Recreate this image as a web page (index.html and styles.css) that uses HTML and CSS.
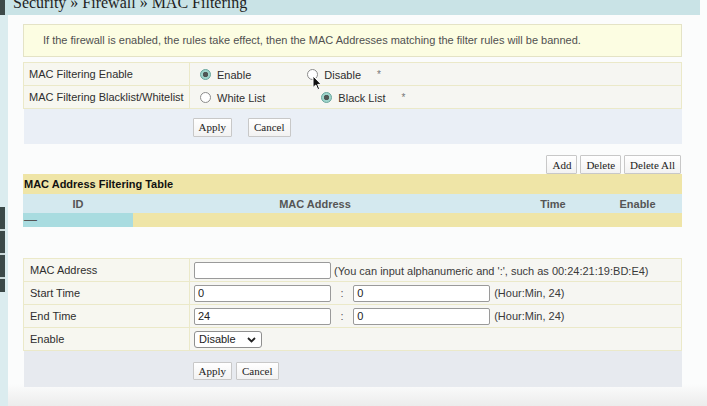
FILE: index.html
```html
<!DOCTYPE html>
<html lang="en">
<head>
<meta charset="UTF-8">
<title>MAC Filtering</title>
<link rel="stylesheet" href="styles.css">
</head>
<body>
<div class="frame">
    <aside class="rail">
        <span class="rail-top"></span>
        <span class="rail-item"></span>
        <span class="rail-item"></span>
        <span class="rail-item"></span>
        <span class="rail-item short"></span>
    </aside>

    <main class="page">
        <h1 class="crumbs">Security &raquo; Firewall &raquo; MAC Filtering</h1>

        <div class="content">
            <p class="notice">If the firewall is enabled, the rules take effect, then the MAC Addresses matching the filter rules will be banned.</p>

            <table class="settings">
                <colgroup><col class="c-label"><col></colgroup>
                <tr>
                    <td class="label">MAC Filtering Enable</td>
                    <td class="value">
                        <label class="opt"><input type="radio" name="filter" checked>Enable</label>
                        <label class="opt last">
                            <input type="radio" name="filter">Disable
                            <svg class="cursor" width="10" height="16" viewBox="0 0 10 16">
                                <path d="M1 1 L1 12.5 L3.8 10 L5.8 14.6 L7.6 13.8 L5.7 9.4 L9.2 9.4 Z" fill="#111" stroke="#fff" stroke-width="1"/>
                            </svg>
                        </label>
                        <span class="req">*</span>
                    </td>
                </tr>
                <tr>
                    <td class="label">MAC Filtering Blacklist/Whitelist</td>
                    <td class="value">
                        <label class="opt"><input type="radio" name="mode">White List</label>
                        <label class="opt last"><input type="radio" name="mode" checked>Black List</label>
                        <span class="req">*</span>
                    </td>
                </tr>
                <tr class="actions">
                    <td></td>
                    <td>
                        <div class="btns wide">
                            <button type="button" class="btn">Apply</button>
                            <button type="button" class="btn">Cancel</button>
                        </div>
                    </td>
                </tr>
            </table>

            <div class="toolbar">
                <button type="button" class="btn">Add</button>
                <button type="button" class="btn">Delete</button>
                <button type="button" class="btn">Delete All</button>
            </div>

            <table class="list">
                <colgroup><col class="c-id"><col class="c-mac"><col class="c-time"><col></colgroup>
                <tr class="title"><th colspan="4">MAC Address Filtering Table</th></tr>
                <tr class="head"><th>ID</th><th>MAC Address</th><th>Time</th><th class="en">Enable</th></tr>
                <tr class="empty"><td class="id">&mdash;</td><td colspan="3"></td></tr>
            </table>

            <table class="entry">
                <colgroup><col class="c-label"><col></colgroup>
                <tr>
                    <td class="label">MAC Address</td>
                    <td class="value">
                        <input type="text" class="field">
                        <span class="hint mac">(You can input alphanumeric and ':', such as 00:24:21:19:BD:E4)</span>
                    </td>
                </tr>
                <tr>
                    <td class="label">Start Time</td>
                    <td class="value">
                        <input type="text" class="field" value="0">
                        <span class="colon">:</span>
                        <input type="text" class="field" value="0">
                        <span class="hint">(Hour:Min, 24)</span>
                    </td>
                </tr>
                <tr>
                    <td class="label">End Time</td>
                    <td class="value">
                        <input type="text" class="field" value="24">
                        <span class="colon">:</span>
                        <input type="text" class="field" value="0">
                        <span class="hint">(Hour:Min, 24)</span>
                    </td>
                </tr>
                <tr>
                    <td class="label">Enable</td>
                    <td class="value">
                        <div class="select-wrap">
                            <select class="select">
                                <option>Disable</option>
                                <option>Enable</option>
                            </select>
                            <svg class="chev" width="9" height="6" viewBox="0 0 9 6">
                                <path d="M1 1 L4.5 4.5 L8 1" fill="none" stroke="#222" stroke-width="1.8"/>
                            </svg>
                        </div>
                    </td>
                </tr>
                <tr class="actions">
                    <td></td>
                    <td>
                        <div class="btns">
                            <button type="button" class="btn">Apply</button>
                            <button type="button" class="btn">Cancel</button>
                        </div>
                    </td>
                </tr>
            </table>
        </div>
    </main>
</div>
</body>
</html>
```

FILE: styles.css
```css
body {
    margin: 0;
    font-family: "Liberation Sans", Arial, sans-serif;
    font-size: 11px;
    color: #333;
    background: #f9fafa;
}
.frame {
    display: flex;
    min-height: 406px;
}

/* left menu strip */
.rail {
    width: 8px;
    display: flex;
    flex-direction: column;
    background: #dbecef;
}
.rail-top {
    height: 15px;
    margin-bottom: 192px;
    background: linear-gradient(to right, #3e4a49 5px, #c9e3e6 5px);
}
.rail-item {
    width: 5px;
    height: 22px;
    background: #3b4948;
    border-bottom: 2px solid #c9d8d8;
}
.rail-item.short {
    height: 13px;
    border: 0;
}

.page {
    flex: 1;
    background: linear-gradient(to bottom, #fbfcfc 0, #fbfcfc 384px, #ececec 406px);
}
.crumbs {
    margin: 0 7px 0 0;
    height: 15px;
    padding-left: 5px;
    overflow: hidden;
    background: #c9e3e6;
    font-family: "Liberation Serif", serif;
    font-size: 16px;
    font-weight: normal;
    line-height: 5px;
    color: #1e1e1e;
}
.content {
    padding: 0 25px 0 15px;
}
.notice {
    margin: 9px 0 0;
    padding: 0 19px;
    line-height: 31px;
    background: #fcfde2;
    border: 1px solid #e4e3c6;
    color: #505050;
}

/* settings / entry tables */
.settings, .entry {
    width: 100%;
    border-collapse: collapse;
    table-layout: fixed;
}
.settings {
    margin-top: 5px;
}
.entry {
    margin-top: 31px;
}
.c-label {
    width: 166px;
}
.settings td, .entry td {
    height: 22px;
    padding: 0;
    border: 1px solid #ebe9c9;
    background: #f6f6f2;
    white-space: nowrap;
}
.settings .label, .entry .label {
    padding-left: 5px;
    background: #f7f7f0;
    color: #2e2e2e;
}
.entry .label {
    padding-left: 6px;
}
.settings .value {
    padding-left: 10px;
}
.entry .value {
    padding-left: 4px;
}
.settings .actions td, .entry .actions td {
    border: 0;
    background: #eaeff6;
}
.settings .actions td {
    height: 35px;
}
.entry .actions td {
    height: 36px;
    background: #e7eaef;
}

.opt {
    position: relative;
    display: inline-flex;
    align-items: center;
    gap: 6px;
    margin-right: 53px;
    vertical-align: middle;
    color: #2e2e2e;
}
.opt.last {
    margin-right: 0;
}
.opt input {
    appearance: none;
    width: 11px;
    height: 11px;
    margin: 0;
    border: 1px solid #8c8c8c;
    border-radius: 50%;
    background: #fff;
}
.opt input:checked {
    border-color: #6aa69d;
    background: radial-gradient(circle, #4f5755 0 2.4px, #9ed4cb 3px);
}
.cursor {
    position: absolute;
    left: 5px;
    top: 6px;
}
.req {
    margin-left: 13px;
    color: #777;
    font-size: 10px;
    vertical-align: middle;
}

.btns {
    display: flex;
    gap: 4px;
    padding-left: 3px;
    margin-top: 3px;
}
.btns.wide {
    gap: 16px;
    padding-left: 3px;
    margin-top: 1px;
}
.btn {
    height: 19px;
    padding: 0 5px;
    border: 1px solid #c8c8c8;
    border-radius: 1px;
    background: linear-gradient(#ffffff, #f2f2f2);
    font-family: "Liberation Serif", serif;
    font-size: 11px;
    color: #222;
}
.entry .btn {
    height: 18px;
}

.toolbar {
    display: flex;
    justify-content: flex-end;
    gap: 3px;
    margin-top: 11px;
    padding-right: 1px;
}

/* filter list */
.list {
    width: 100%;
    border-collapse: collapse;
    table-layout: fixed;
}
.c-id {
    width: 110px;
}
.c-mac {
    width: 364px;
}
.c-time {
    width: 112px;
}
.list th, .list td {
    padding: 0;
}
.list .title th {
    height: 20px;
    padding-left: 1px;
    text-align: left;
    background: #efe5a7;
    color: #111;
    font-size: 11px;
}
.list .head th {
    height: 19px;
    background: #d4e9ef;
    color: #555;
    font-size: 11px;
}
.list .head .en {
    padding-right: 16px;
}
.list .empty td {
    height: 14px;
    background: #efe5a7;
}
.list .empty .id {
    padding-left: 1px;
    background: #a9dce0;
    color: #555;
    font-size: 13px;
    line-height: 10px;
}

/* inputs */
.field {
    box-sizing: border-box;
    width: 137px;
    height: 17px;
    margin: 0;
    padding: 0 3px;
    border: 1px solid #9a9a9a;
    border-radius: 2px;
    background: #fff;
    font-family: "Liberation Sans", Arial, sans-serif;
    font-size: 11px;
    color: #222;
    vertical-align: middle;
}
.colon {
    display: inline-block;
    width: 16px;
    text-align: center;
    color: #555;
    vertical-align: middle;
}
.hint {
    margin-left: 1px;
    color: #3a3a3a;
    vertical-align: middle;
}
.hint.mac {
    margin-left: 0;
}
.select-wrap {
    position: relative;
    display: inline-block;
    vertical-align: middle;
}
.select {
    appearance: none;
    width: 68px;
    height: 17px;
    margin: 0;
    padding: 0 0 0 4px;
    border: 1px solid #8f8f8f;
    border-radius: 3px;
    background: #fff;
    font-family: "Liberation Sans", Arial, sans-serif;
    font-size: 11px;
    color: #222;
}
.chev {
    position: absolute;
    right: 6px;
    top: 6px;
    pointer-events: none;
}
```
